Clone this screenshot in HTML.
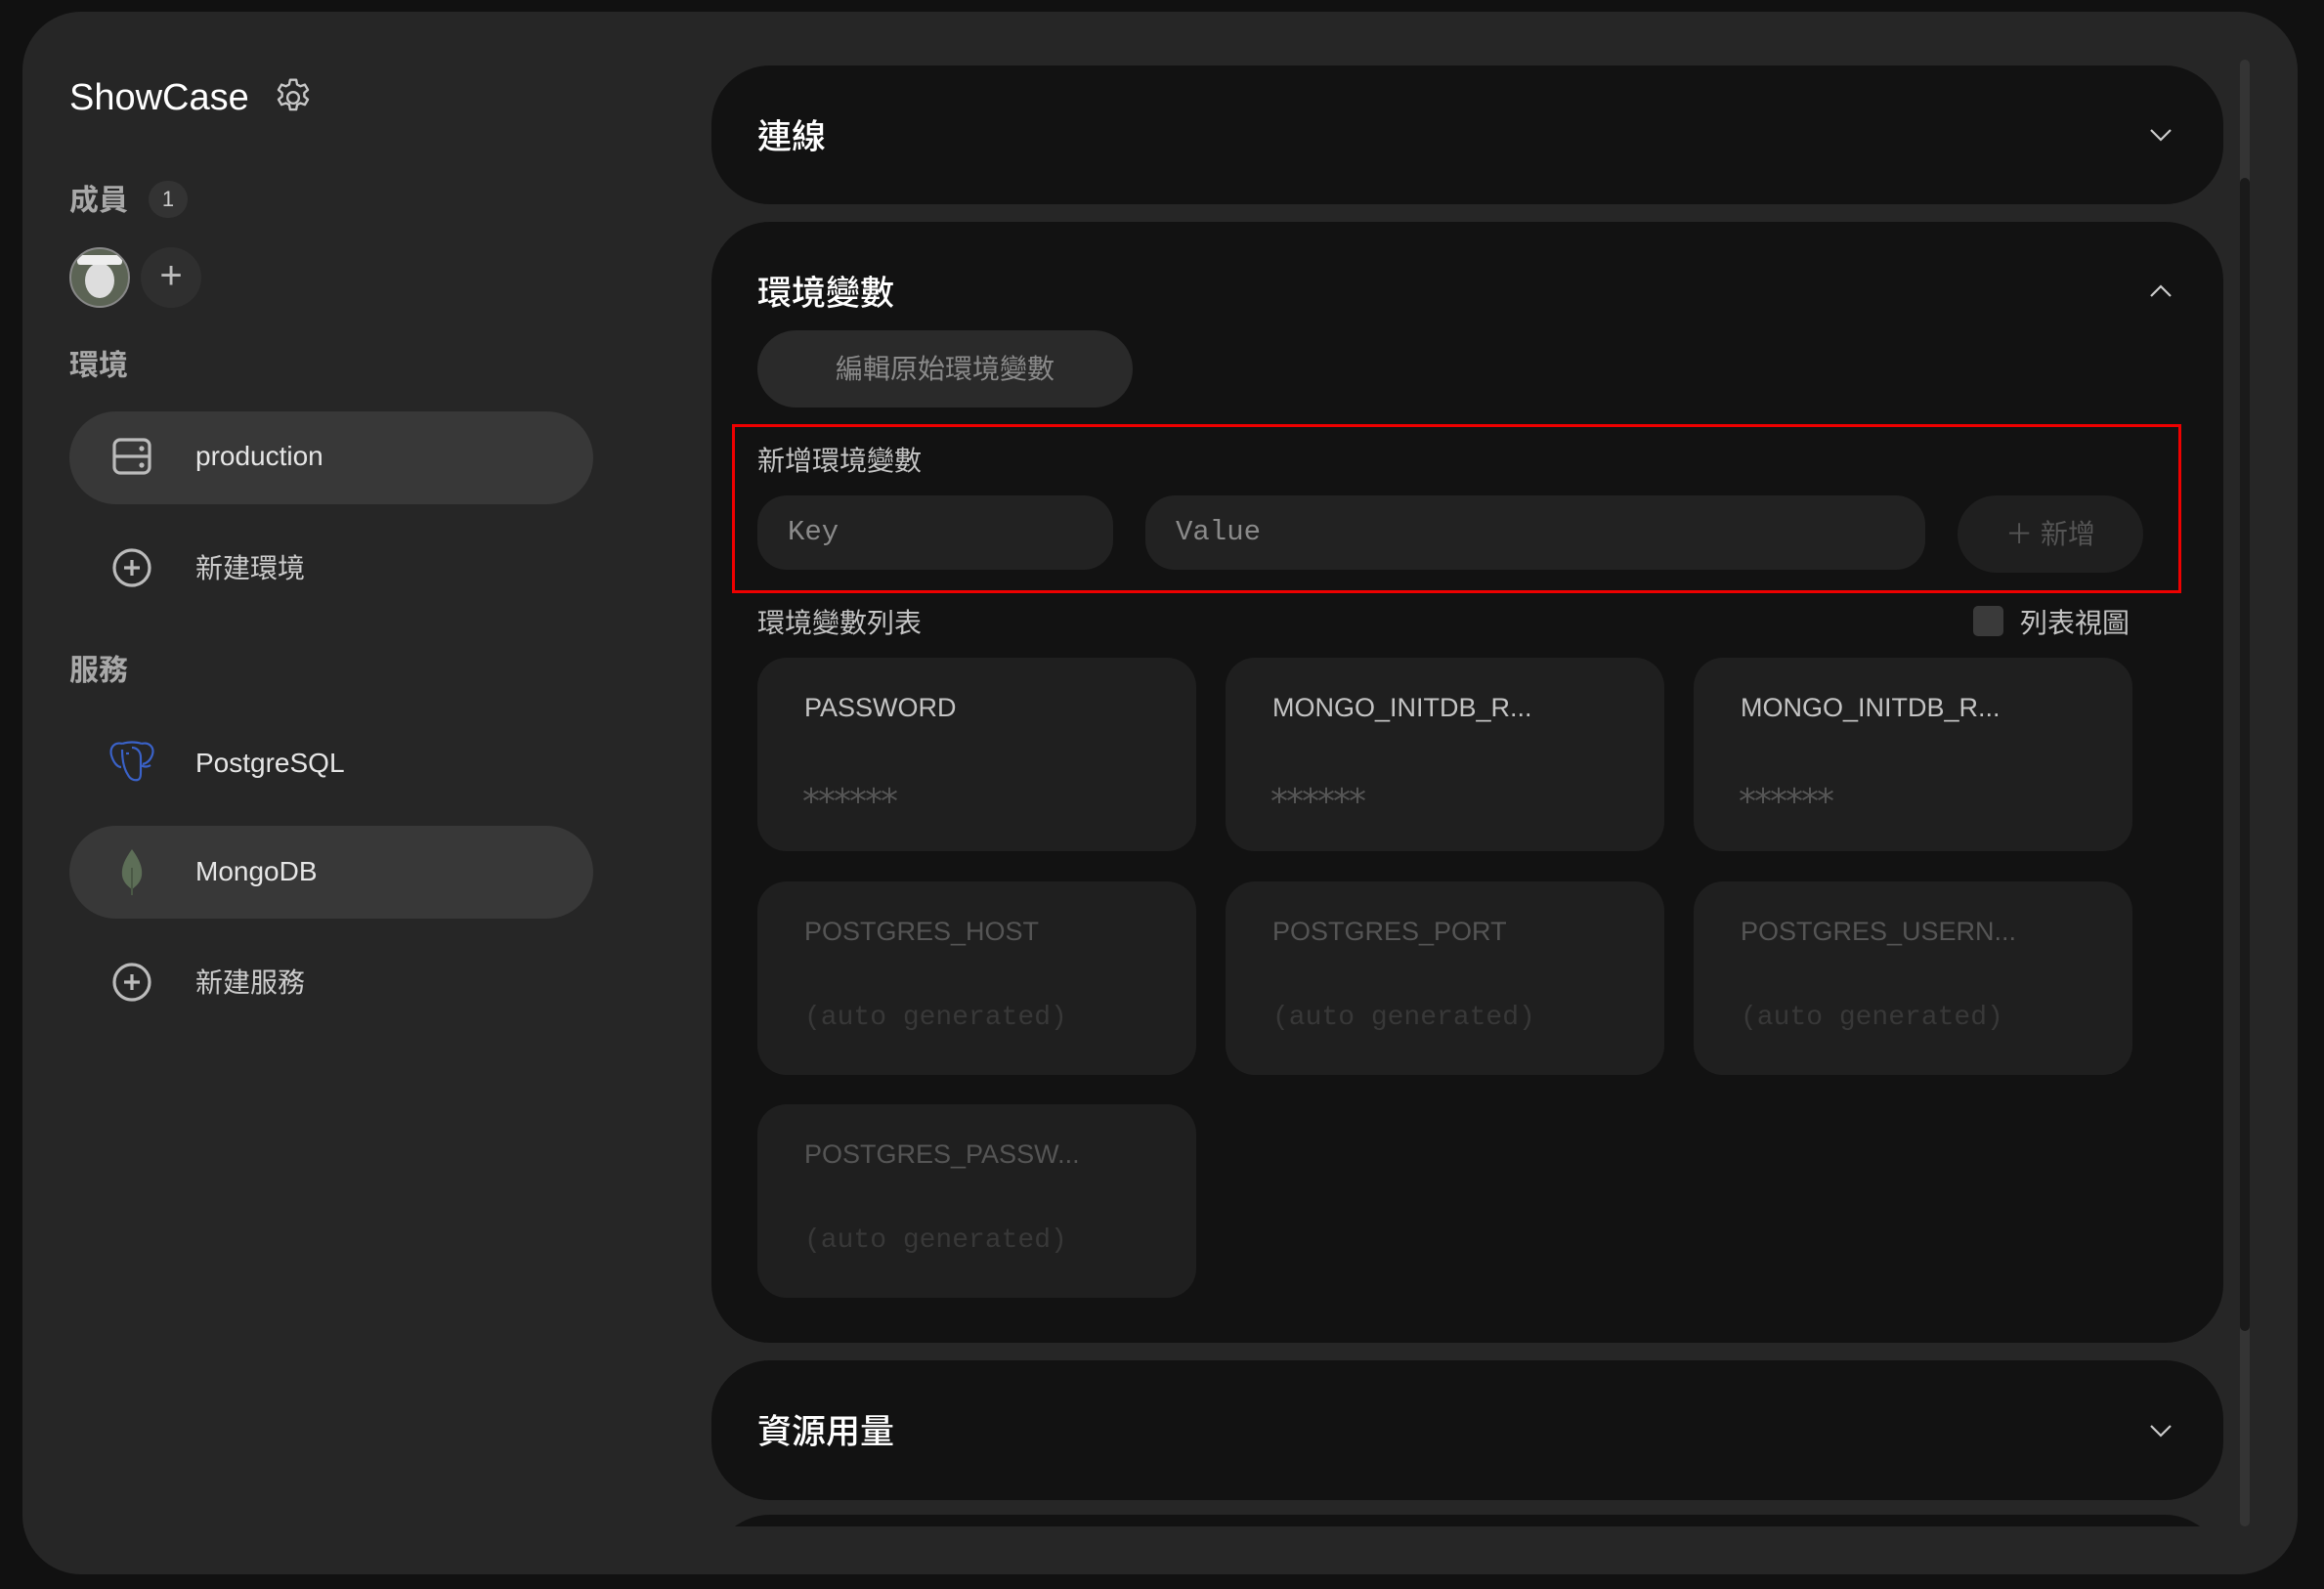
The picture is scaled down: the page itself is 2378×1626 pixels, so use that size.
<!DOCTYPE html>
<html><head><meta charset="utf-8"><style>
*{margin:0;padding:0;box-sizing:border-box}
body{width:2378px;height:1626px;background:#111;overflow:hidden;font-family:"Liberation Sans","Noto Sans CJK TC",sans-serif;position:relative}
.a{position:absolute}
.panel{left:23px;top:12px;width:2328px;height:1599px;background:#262626;border-radius:60px;overflow:hidden}
.sec{color:#a8a8a8;font-size:30px;font-weight:700;left:71px}
.row{left:71px;width:536px;height:95px;border-radius:48px}
.rowt{color:#e6e6e6;font-size:28px;left:200px}
.card{background:#121212;border-radius:60px;left:728px;width:1547px}
.ct{color:#fff;font-size:35px;font-weight:500;left:47px}
.ev{background:#1f1f1f;border-radius:30px;width:449px;height:198px}
.en{left:48px;top:36px;font-size:27px;color:#c4c4c4;white-space:nowrap}
.evv{left:48px;top:122px;font-size:28px;color:#555;font-family:"Liberation Mono",monospace}
.star{left:46px;top:127px;font-size:36px;color:#555;letter-spacing:-2px;font-family:"DejaVu Sans",sans-serif}
.dim .en{color:#555}
.dim .evv{color:#383838}
.inp{background:#222;border-radius:30px;height:76px;top:507px;color:#8a8a8a;font-family:"Liberation Mono",monospace;font-size:29px;line-height:76px;padding-left:31px}
</style></head><body>
<div class="a panel"></div>

<!-- sidebar -->
<div class="a" style="left:71px;top:79px;color:#fff;font-size:38px;font-weight:500">ShowCase</div>
<svg class="a" style="left:278px;top:78px" width="44" height="44" viewBox="0 0 24 24" fill="none" stroke="#c8c8c8" stroke-width="1.3" stroke-linejoin="round"><path d="M10.3 2h3.4l.5 2.6 1.8 1 2.5-.9 1.7 2.9-2 1.7v2l2 1.7-1.7 2.9-2.5-.9-1.8 1-.5 2.6h-3.4l-.5-2.6-1.8-1-2.5.9-1.7-2.9 2-1.7v-2l-2-1.7 1.7-2.9 2.5.9 1.8-1z"/><circle cx="12" cy="12" r="3.2"/></svg>

<div class="a sec" style="top:180px">成員</div>
<div class="a" style="left:152px;top:185px;width:40px;height:38px;border-radius:19px;background:#333;color:#ccc;font-size:22px;text-align:center;line-height:38px">1</div>
<div class="a" style="left:71px;top:253px;width:62px;height:62px;border-radius:50%;background:#5c6455;border:2px solid #888;overflow:hidden">
  <div class="a" style="left:14px;top:14px;width:30px;height:36px;border-radius:50%;background:#ddd"></div>
  <div class="a" style="left:6px;top:6px;width:46px;height:10px;background:#eee;border-radius:3px"></div>
</div>
<div class="a" style="left:144px;top:253px;width:62px;height:62px;border-radius:50%;background:#2f2f2f;color:#bbb;font-size:40px;text-align:center;line-height:58px;font-weight:300">+</div>

<div class="a sec" style="top:349px">環境</div>
<div class="a row" style="top:421px;background:#383838"></div>
<svg class="a" style="left:115px;top:448px" width="40" height="38" viewBox="0 0 40 38" fill="none" stroke="#bbb" stroke-width="3.2"><rect x="2" y="2" width="36" height="34" rx="6"/><line x1="2" y1="19" x2="38" y2="19"/><circle cx="30" cy="11" r="1" fill="#bbb"/><circle cx="30" cy="28" r="1" fill="#bbb"/></svg>
<div class="a rowt" style="top:451px">production</div>
<svg class="a" style="left:115px;top:561px" width="40" height="40" viewBox="0 0 40 40" fill="none" stroke="#bbb" stroke-width="3.2"><circle cx="20" cy="20" r="18"/><path d="M20 12v16M12 20h16"/></svg>
<div class="a rowt" style="top:560px;color:#ccc">新建環境</div>

<div class="a sec" style="top:661px">服務</div>
<svg class="a" style="left:111px;top:757px" width="48" height="50" viewBox="0 0 48 50" fill="none" stroke="#3a62c9" stroke-width="2.2"><path d="M14 4C6 2 1 8 3 16c2 7 6 12 10 12M14 4c6-2 14-2 20 0M34 4c8-2 13 4 11 11-2 6-6 9-10 10M14 10c0 10 2 20 6 26 2 4 6 6 10 5 3-1 3-5 3-9V18c0-6-4-10-9-10"/><path d="M33 26c3 2 7 2 10 0"/><path d="M18 14h3"/></svg>
<div class="a rowt" style="top:765px">PostgreSQL</div>
<div class="a row" style="top:845px;background:#383838"></div>
<svg class="a" style="left:121px;top:868px" width="28" height="50" viewBox="0 0 28 50"><path d="M14 1C6 12 3 20 4 28c1 7 6 11 10 14 4-3 9-7 10-14 1-8-2-16-10-27z" fill="#5d6e57"/><path d="M14 20v28" stroke="#4a5845" stroke-width="2"/></svg>
<div class="a rowt" style="top:876px">MongoDB</div>
<svg class="a" style="left:115px;top:985px" width="40" height="40" viewBox="0 0 40 40" fill="none" stroke="#bbb" stroke-width="3.2"><circle cx="20" cy="20" r="18"/><path d="M20 12v16M12 20h16"/></svg>
<div class="a rowt" style="top:984px;color:#ccc">新建服務</div>

<!-- scrollbar -->
<div class="a" style="left:2292px;top:61px;width:10px;height:1501px;background:#343434;border-radius:5px"></div>
<div class="a" style="left:2292px;top:182px;width:10px;height:1180px;background:#1a1a1a;border-radius:5px"></div>

<!-- main -->
<div class="a" style="left:0;top:0;width:2378px;height:1562px;overflow:hidden">
  <div class="a card" style="top:67px;height:142px">
    <div class="a ct" style="top:45px">連線</div>
    <svg class="a" style="left:1470px;top:63px" width="26" height="16" viewBox="0 0 26 16" fill="none" stroke="#ccc" stroke-width="2.2"><path d="M3 3l10 10 10-10"/></svg>
  </div>
  <div class="a card" style="top:227px;height:1147px">
    <div class="a ct" style="top:45px">環境變數</div>
    <svg class="a" style="left:1470px;top:63px" width="26" height="16" viewBox="0 0 26 16" fill="none" stroke="#ccc" stroke-width="2.2"><path d="M3 13l10-10 10 10"/></svg>
  </div>
  <div class="a" style="left:775px;top:338px;width:384px;height:79px;border-radius:40px;background:#2a2a2a;color:#8a8a8a;font-size:28px;text-align:center;line-height:79px">編輯原始環境變數</div>
  <div class="a" style="left:749px;top:434px;width:1483px;height:173px;border:3px solid #e00"></div>
  <div class="a" style="left:775px;top:450px;color:#c4c4c4;font-size:28px">新增環境變數</div>
  <div class="a inp" style="left:775px;width:364px">Key</div>
  <div class="a inp" style="left:1172px;width:798px">Value</div>
  <div class="a" style="left:2003px;top:507px;width:190px;height:79px;border-radius:40px;background:#1f1f1f;color:#555;font-size:28px;text-align:center;line-height:79px">＋ 新增</div>
  <div class="a" style="left:775px;top:616px;color:#c4c4c4;font-size:28px">環境變數列表</div>
  <div class="a" style="left:2019px;top:620px;width:31px;height:31px;border-radius:5px;background:#3a3a3a"></div>
  <div class="a" style="left:2067px;top:616px;color:#c4c4c4;font-size:28px">列表視圖</div>

  <div class="a ev" style="left:775px;top:673px"><div class="a en">PASSWORD</div><div class="a star">******</div></div>
  <div class="a ev" style="left:1254px;top:673px"><div class="a en">MONGO_INITDB_R...</div><div class="a star">******</div></div>
  <div class="a ev" style="left:1733px;top:673px"><div class="a en">MONGO_INITDB_R...</div><div class="a star">******</div></div>
  <div class="a ev dim" style="left:775px;top:902px"><div class="a en">POSTGRES_HOST</div><div class="a evv" style="top:124px">(auto generated)</div></div>
  <div class="a ev dim" style="left:1254px;top:902px"><div class="a en">POSTGRES_PORT</div><div class="a evv" style="top:124px">(auto generated)</div></div>
  <div class="a ev dim" style="left:1733px;top:902px"><div class="a en">POSTGRES_USERN...</div><div class="a evv" style="top:124px">(auto generated)</div></div>
  <div class="a ev dim" style="left:775px;top:1130px"><div class="a en">POSTGRES_PASSW...</div><div class="a evv" style="top:124px">(auto generated)</div></div>

  <div class="a card" style="top:1392px;height:143px">
    <div class="a ct" style="top:45px">資源用量</div>
    <svg class="a" style="left:1470px;top:64px" width="26" height="16" viewBox="0 0 26 16" fill="none" stroke="#ccc" stroke-width="2.2"><path d="M3 3l10 10 10-10"/></svg>
  </div>
  <div class="a card" style="top:1550px;height:143px"></div>
</div>
</body></html>
